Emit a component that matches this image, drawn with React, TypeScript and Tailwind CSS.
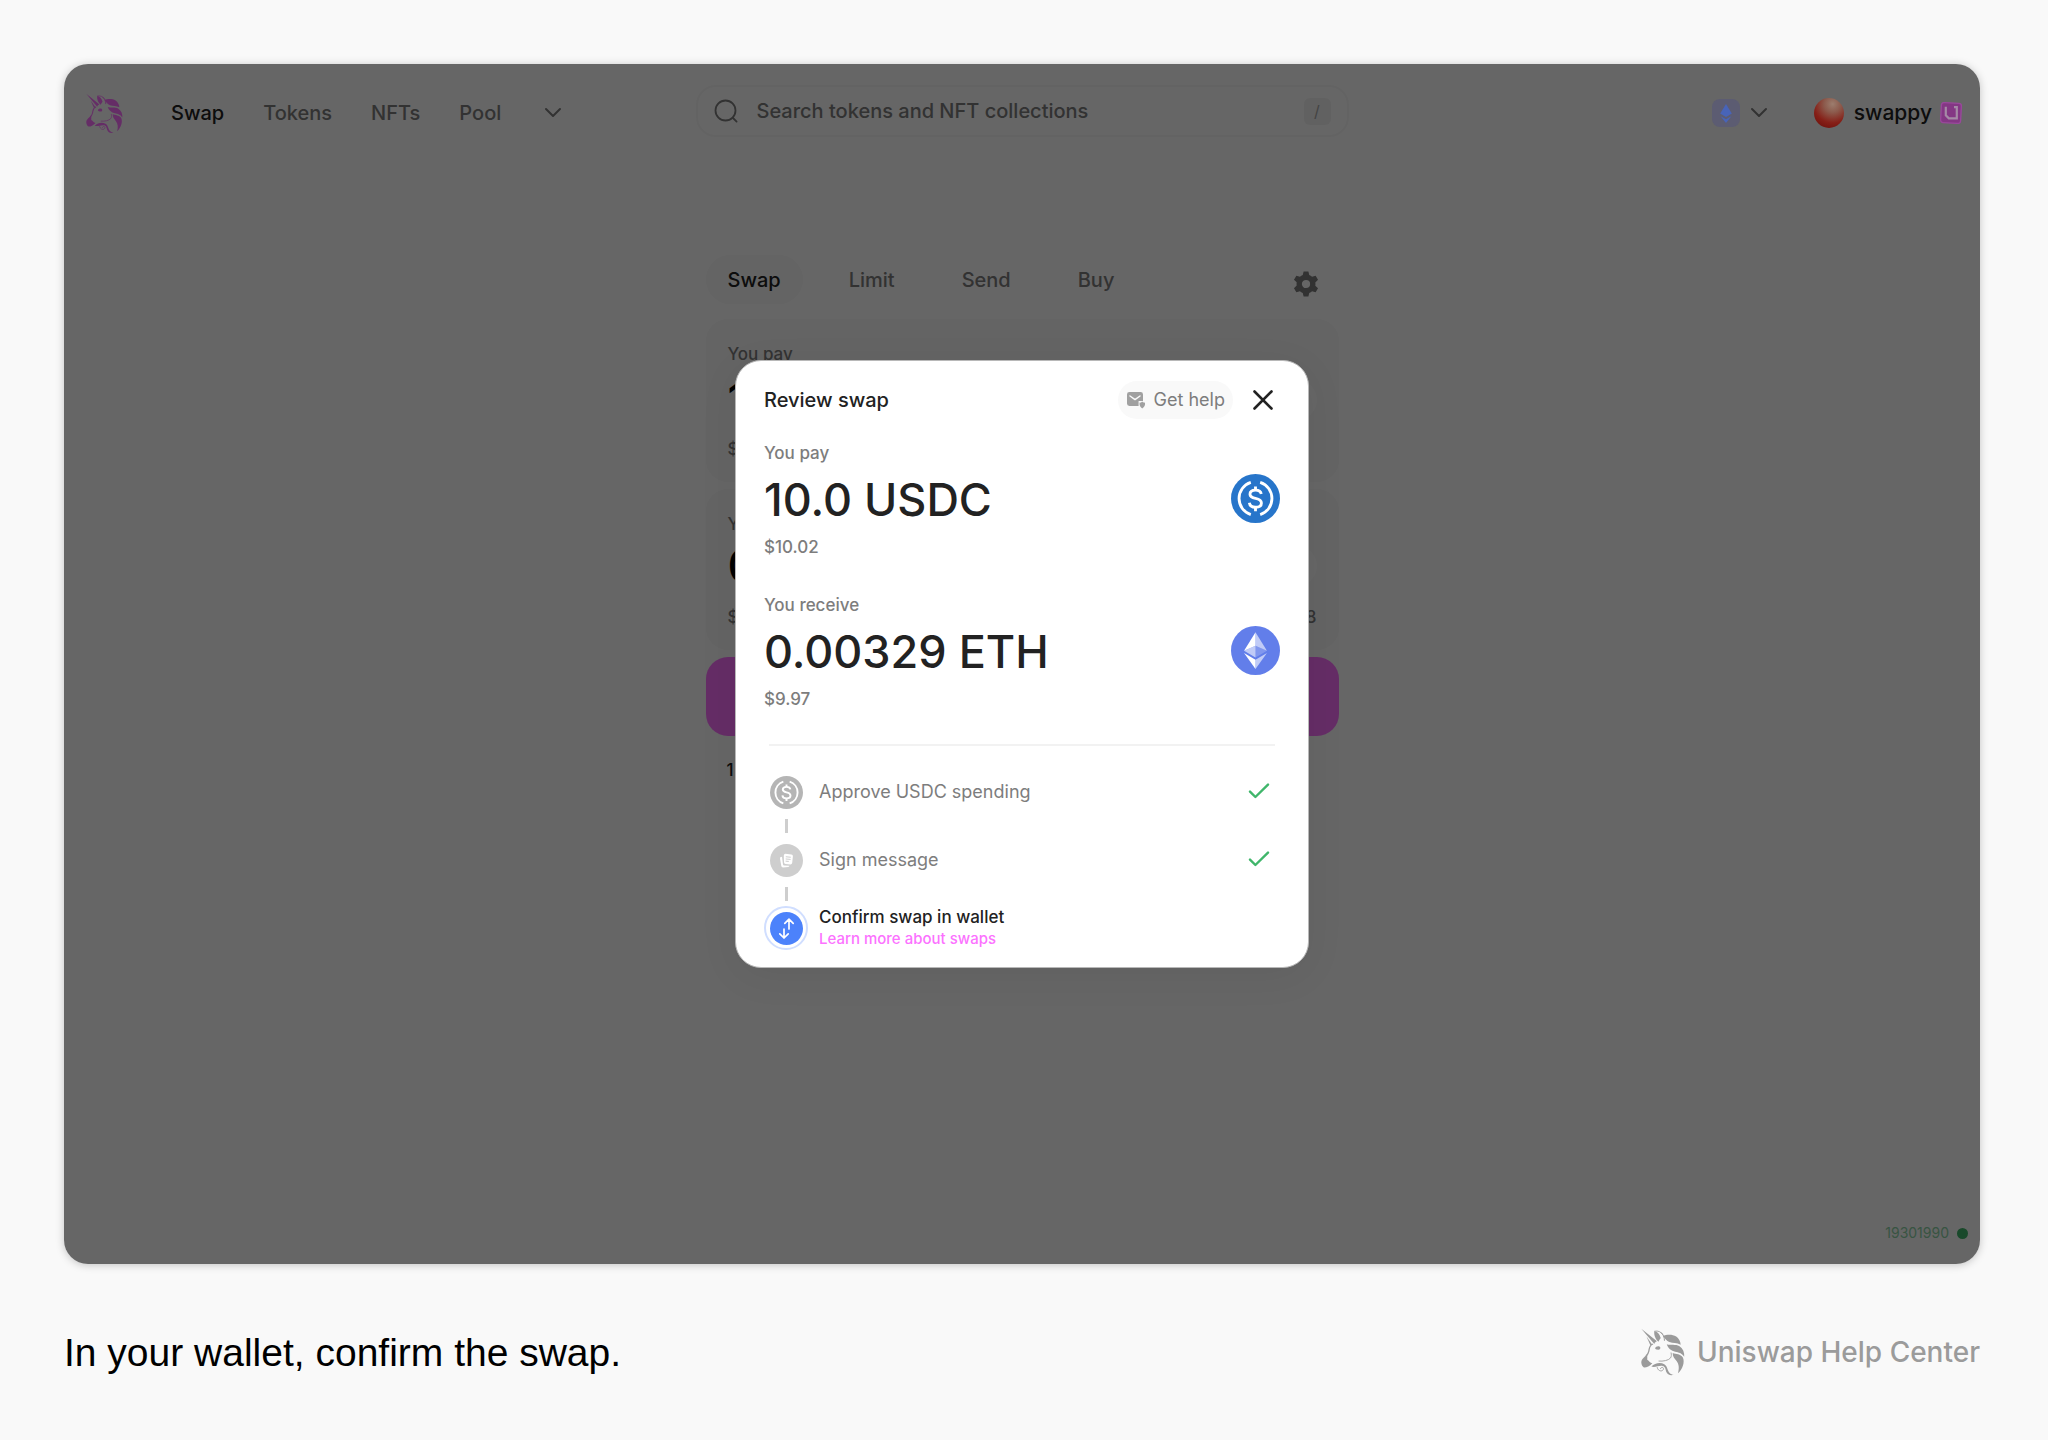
import { ReactNode } from 'react';

const tokens = {
  pay: { label: 'You pay', amount: '10.0 USDC', fiat: '$10.02' },
  receive: { label: 'You receive', amount: '0.00329 ETH', fiat: '$9.97' },
};

const navLinks = ['Tokens', 'NFTs', 'Pool'];
const tabs = ['Limit', 'Send', 'Buy'];

function UnicornLogo({ className }: { className: string }) {
  return (
    <svg viewBox="6 4 45 49" className={className} aria-hidden="true">
      <g fill="currentColor">
        <path d="M6.3 4.6 L22.4 17.6 C21 18 20.2 18.8 19.6 20.2 Z" />
        <path d="M11.6 12.6 L17.6 21 L15.6 21.6 Z" />
        <path d="M19.6 7.2 C23 7.4 25 10 26.2 14.2 C25.4 15.6 24.4 16.6 23.8 18 C21 15.4 19 11.4 19.6 7.2 Z" />
        <path d="M28.4 12.2 C32 10.6 38 10.2 42 12.6 C44.6 14.4 46.4 17.4 46.6 21 C42.6 18.8 38.6 19.8 35 18.4 C32.2 17.2 30.4 14.6 28.4 12.2 Z" />
        <path d="M32.4 20.6 C36 22 41.4 20.2 45.4 22.6 C49 25 50.6 29 50.2 33.4 C47.6 29.4 44.6 29 41 28.2 C37 27.2 33.6 24.8 32.4 20.6 Z" />
        <path d="M38.4 29.4 C42 30.6 46.4 30.4 48.8 34 C51 38.6 48.6 46 43.8 50.2 C45.4 44.6 44.6 40.8 42.4 37.8 C40.4 35.2 38.2 33 38.4 29.4 Z" />
        <path d="M12.4 30.4 C10.6 33.4 6.4 35.2 6.3 39.2 C6.4 42 7.8 43.6 9 44.4 C11.6 44.6 14.6 43.2 17.6 40 C15.2 40 14.6 37.4 12.4 36.4 Z" />
        <path d="M20.4 24.6 C21 22.4 25 21.6 25.8 24 C26 26.4 23.8 26.4 22.6 26 C21.4 25.8 20.8 25.4 20.4 24.6 Z" />
        <path d="M16.6 43.4 C20 39.6 26 38.8 29.8 41 C33.6 43.4 32.6 47.6 35.6 50.2 C36.6 51.2 38 51.6 39.4 51.8 C36 53 33 51.4 31.8 48.6 C31 46.2 31 43.6 28.2 42.8 C24.8 42 20.6 44.6 16.6 43.4 Z" />
      </g>
      <g fill="none" stroke="currentColor" strokeLinecap="round">
        <path d="M17.8 20.6 C14.4 21.8 14.6 25 14 27.6 C13.6 29.6 12.8 31 11.4 32.6" strokeWidth="1.3" />
        <path d="M26.6 8.6 C28.8 10.6 30 13.4 30 16.6" strokeWidth="1" />
        <path d="M20 7.2 C23.6 6.4 26.6 8 28 10.4" strokeWidth="0.9" />
        <path d="M24.4 37.8 C28.6 38.2 34 37.2 36.2 34.6 C37.2 33.2 37.2 31.2 36.8 29.4" strokeWidth="0.9" />
        <path d="M22.6 44.4 C23.4 48.6 28.6 49 29 45.6 C29 43.8 26.4 43.6 26 45.4" strokeWidth="0.9" />
      </g>
    </svg>
  );
}

function UsdcIcon({ className }: { className: string }) {
  return (
    <svg viewBox="0 0 48 48" className={className} aria-hidden="true">
      <circle cx="24" cy="24" r="24" fill="currentColor" />
      <g fill="none" stroke="#fff" strokeWidth="2.8">
        <path d="M19.4 8.2 A16.6 16.6 0 0 0 19.4 39.8" />
        <path d="M28.6 8.2 A16.6 16.6 0 0 1 28.6 39.8" />
        <path d="M29.6 19.6 C29.2 16.8 27 15.8 24 15.8 C20.8 15.8 18.6 17.2 18.6 19.8 C18.6 22.6 20.8 23.2 24 23.9 C27.4 24.6 29.8 25.4 29.8 28.4 C29.8 31.2 27.4 32.6 24 32.6 C20.6 32.6 18.4 31.2 18 28.2" />
        <path d="M24 12.2 V16 M24 32.4 V36.4" />
      </g>
    </svg>
  );
}

function EthIcon({ className }: { className: string }) {
  return (
    <svg viewBox="0 0 48 48" className={className} aria-hidden="true">
      <circle cx="24" cy="24" r="24" fill="#627eea" />
      <g fill="#fff">
        <path d="M24 6 L24 19.3 L35.2 24.3 Z" opacity="0.6" />
        <path d="M24 6 L12.8 24.3 L24 19.3 Z" />
        <path d="M24 33 L24 42 L35.2 26.5 Z" opacity="0.6" />
        <path d="M24 42 L24 33 L12.8 26.5 Z" />
        <path d="M24 30.9 L35.2 24.3 L24 19.3 Z" opacity="0.2" />
        <path d="M12.8 24.3 L24 30.9 L24 19.3 Z" opacity="0.6" />
      </g>
    </svg>
  );
}

function Chevron() {
  return (
    <svg viewBox="0 0 18 12" className="h-3 w-[18px]" fill="none" stroke="currentColor" strokeWidth="2" strokeLinecap="round" strokeLinejoin="round" aria-hidden="true">
      <path d="M2 2 L9 9 L16 2" />
    </svg>
  );
}

function Check() {
  return (
    <svg viewBox="0 0 22 18" className="h-[18px] w-[22px] text-[#40b66b]" fill="none" stroke="currentColor" strokeWidth="2.4" strokeLinecap="round" strokeLinejoin="round" role="img" aria-label="Done">
      <path d="M2 8.6 L7.4 14 L20 1.6" />
    </svg>
  );
}

function Header() {
  return (
    <header className="grid grid-cols-[1fr_auto_1fr] items-center px-[22px] pt-[21px]">
      <nav className="flex items-center pt-1 text-xl leading-7 font-medium text-[#7d7d7d]">
        <UnicornLogo className="mr-12 h-[41px] w-[37px] text-[#fc72ff]" />
        <div className="flex items-center gap-[39px]">
          <a href="#swap" className="text-[#222222]">Swap</a>
          {navLinks.map((link) => (
            <a key={link} href={`#${link.toLowerCase()}`}>{link}</a>
          ))}
          <button type="button" aria-label="More" className="ml-1">
            <Chevron />
          </button>
        </div>
      </nav>

      <div className="flex h-[52px] w-[653px] items-center gap-4 rounded-[20px] border-2 border-[#f8f8f8] px-4 text-[#7d7d7d]">
        <svg viewBox="0 0 24 24" className="h-6 w-6" fill="none" stroke="currentColor" strokeWidth="1.8" strokeLinecap="round" aria-hidden="true">
          <circle cx="11.5" cy="11.5" r="10" />
          <path d="M19 19 L22.6 22.6" />
        </svg>
        <input
          type="text"
          aria-label="Search"
          placeholder="Search tokens and NFT collections"
          className="ml-[3px] min-w-0 flex-1 bg-transparent text-xl leading-7 font-medium outline-none placeholder:text-[#7d7d7d]"
        />
        <kbd className="flex h-[27px] w-[27px] items-center justify-center rounded-md bg-[#f3f3f3] font-[Inter,sans-serif] text-base text-[#a8a8a8]">/</kbd>
      </div>

      <div className="-mr-1 flex items-center justify-end pt-1">
        <button type="button" aria-label="Network" className="flex items-center gap-[10px] text-[#7d7d7d]">
          <span className="relative z-20 flex h-7 w-7 items-center justify-center rounded-lg bg-[#5c5c72]">
            <svg viewBox="0 0 12 19" className="h-[19px] w-3" fill="#4864b8" aria-hidden="true">
              <path d="M6 0 L11.8 9.6 L6 13 L0.2 9.6 Z" />
              <path d="M0.6 12.2 L6 15.2 L11.4 12.2 L6 19 Z" />
            </svg>
          </span>
          <Chevron />
        </button>
        <button type="button" className="ml-[46px] flex items-center text-[21px] leading-7 font-medium text-[#222222]">
          <span className="relative z-20 mr-[10px] h-[30px] w-[30px] rounded-full bg-[radial-gradient(circle_at_62%_20%,#9c7d6e_0%,#8c5a4c_28%,#861f17_62%,#640c08_100%)]" />
          swappy
          <svg viewBox="0 0 22 22" className="relative z-20 ml-2 h-[22px] w-[22px]" aria-hidden="true">
            <rect x="1" y="1" width="20" height="20" rx="2.5" fill="#843784" stroke="#99489b" strokeWidth="1.4" transform="rotate(3 11 11)" />
            <path d="M5.8 4.8 V13.4 L8.8 16.4 H16.8 V5.2 H14" fill="none" stroke="#a58aa6" strokeWidth="2.2" />
          </svg>
        </button>
      </div>
    </header>
  );
}

function SwapForm() {
  return (
    <section className="mx-auto mt-[118px] w-[633px] text-[#7d7d7d]">
      <div className="flex h-[49px] items-center text-xl leading-7 font-medium">
        <button type="button" className="h-full rounded-full bg-[#f9f9f9] px-[22px] text-[#222222]">Swap</button>
        <div className="ml-[46px] flex gap-[67px]">
          {tabs.map((tab) => (
            <button key={tab} type="button">{tab}</button>
          ))}
        </div>
        <button type="button" aria-label="Settings" className="mt-2 mr-5 ml-auto">
          <svg viewBox="0 0 24 24" className="h-[26px] w-[26px]" fill="currentColor" aria-hidden="true">
            <path fillRule="evenodd" d="M9.8 0.5 h4.4 l0.8 3.3 a8.6 8.6 0 0 1 2.6 1.5 l3.3 -1 l2.2 3.8 l-2.5 2.4 a8.7 8.7 0 0 1 0 3 l2.5 2.4 l-2.2 3.8 l-3.3 -1 a8.6 8.6 0 0 1 -2.6 1.5 l-0.8 3.3 h-4.4 l-0.8 -3.3 a8.6 8.6 0 0 1 -2.6 -1.5 l-3.3 1 l-2.2 -3.8 l2.5 -2.4 a8.7 8.7 0 0 1 0 -3 l-2.5 -2.4 l2.2 -3.8 l3.3 1 a8.6 8.6 0 0 1 2.6 -1.5 Z M12 8.2 a3.8 3.8 0 1 0 0 7.6 a3.8 3.8 0 1 0 0 -7.6 Z" />
          </svg>
        </button>
      </div>

      <div className="mt-[15px] h-[163px] rounded-[22px] bg-[#f9f9f9] px-[22px] pt-[21px]">
        <p className="text-[17px] leading-7 font-medium">You pay</p>
        <div className="flex items-center justify-between pt-1">
          <p className="text-[45px] leading-[56px] font-medium text-black">10</p>
          <button type="button" aria-label="Select token to pay" className="h-10 w-36 rounded-full bg-white" />
        </div>
        <p className="pt-[7px] text-[17px] leading-7 font-medium">$10.02</p>
      </div>
      <div className="mt-[7px] h-[161px] rounded-[22px] bg-[#f9f9f9] px-[22px] pt-[21px]">
        <p className="text-[17px] leading-7 font-medium">You receive</p>
        <div className="flex items-center justify-between">
          <p className="text-[45px] leading-[56px] font-medium text-black">0.00329</p>
          <button type="button" aria-label="Select token to receive" className="h-10 w-36 rounded-full bg-white" />
        </div>
        <div className="flex justify-between text-[17px] leading-[46px] font-medium">
          <span>$9.97</span>
          <span>Balance: 0.008</span>
        </div>
      </div>
      <button type="button" aria-label="Swap tokens" className="mt-[7px] block h-[79px] w-full rounded-[22px] bg-[#fc72ff]" />
      <p className="px-[21px] pt-5 text-[17px] leading-7 font-medium text-[#222222]">1 USDC = 0.000329 ETH</p>
    </section>
  );
}

function TokenRow({ token, children }: { token: { label: string; amount: string; fiat: string }; children: ReactNode }) {
  return (
    <div className="flex items-center justify-between">
      <div>
        <p className="text-[17px] leading-6 font-medium text-[#7d7d7d]">{token.label}</p>
        <p className="py-1 text-[45px] leading-[62px] font-medium text-[#222222]">{token.amount}</p>
        <p className="text-[17px] leading-6 font-medium text-[#7d7d7d]">{token.fiat}</p>
      </div>
      <span className="mb-1">{children}</span>
    </div>
  );
}

function Step({ icon, children, done }: { icon: ReactNode; children: ReactNode; done?: boolean }) {
  return (
    <li className="flex h-11 items-center gap-[11px]">
      <span className="flex w-11 items-center justify-center">{icon}</span>
      <div className="flex-1 text-lg leading-6 text-[#7d7d7d]">{children}</div>
      {done && <span className="mr-[10px]"><Check /></span>}
    </li>
  );
}

function Connector() {
  return <li aria-hidden="true" className="my-[5px] ml-[21px] h-[14px] w-[3px] bg-[#cecece]" />;
}

function ReviewModal() {
  return (
    <div role="dialog" aria-label="Review swap" className="w-[574px] rounded-[26px] border border-[#b8b8b8] bg-white px-7 pt-5 pb-[17px] shadow-[0_8px_40px_rgba(0,0,0,0.06)]">
      <div className="flex items-center">
        <h1 className="flex-1 text-xl leading-7 font-medium text-[#222222]">Review swap</h1>
        <button type="button" className="flex h-[38px] items-center gap-2 rounded-full bg-[#f9f9f9] px-2 text-lg text-[#7d7d7d]">
          <svg viewBox="0 0 20 18" className="h-[18px] w-5" aria-hidden="true">
            <path d="M3.4 1 H14.6 A2.4 2.4 0 0 1 17 3.4 V10 H12.6 V15 H3.4 A2.4 2.4 0 0 1 1 12.6 V3.4 A2.4 2.4 0 0 1 3.4 1 Z" fill="#a0a0a0" />
            <path d="M4 5 L9 8.6 L14 5" fill="none" stroke="#f9f9f9" strokeWidth="1.5" strokeLinecap="round" strokeLinejoin="round" />
            <path d="M13.6 11.6 C15 11.8 15.8 11 16.2 10.6 C16.8 11.2 17.8 11.8 19 11.6 C19.4 14.4 18.4 16.2 16.2 17.4 C14.2 16.2 13.2 14.4 13.6 11.6 Z" fill="#a0a0a0" />
          </svg>
          Get help
        </button>
        <button type="button" aria-label="Close" className="mr-[7px] ml-5">
          <svg viewBox="0 0 20 20" className="h-5 w-5" fill="none" stroke="#222222" strokeWidth="2.6" strokeLinecap="round" aria-hidden="true">
            <path d="M1.5 1.5 L18.5 18.5 M18.5 1.5 L1.5 18.5" />
          </svg>
        </button>
      </div>

      <div className="mt-[22px] flex flex-col gap-[34px]">
        <TokenRow token={tokens.pay}>
          <UsdcIcon className="h-[49px] w-[49px] text-[#2775ca]" />
        </TokenRow>
        <TokenRow token={tokens.receive}>
          <EthIcon className="h-[49px] w-[49px]" />
        </TokenRow>
      </div>

      <hr className="mx-[5px] mt-[33px] mb-6 border-t-2 border-[#f2f2f2]" />

      <ol>
        <Step done icon={<UsdcIcon className="h-[33px] w-[33px] text-[#b5b5b5]" />}>Approve USDC spending</Step>
        <Connector />
        <Step
          done
          icon={
            <svg viewBox="0 0 33 33" className="h-[33px] w-[33px]" aria-hidden="true">
              <circle cx="16.5" cy="16.5" r="16.5" fill="#cecece" />
              <path d="M10.2 13.2 L12 12.8 L13 20.6 Q13.2 21.6 14.2 21.6 L19.6 21.8 Q19.2 22.8 18.2 22.9 L13 23.4 Q11.6 23.4 11.3 22 L10 14.6 Z" fill="#fff" />
              <path d="M15.4 9.8 L21.4 10.4 Q23 10.6 22.9 12.2 L22.2 18.8 Q22 20.4 20.4 20.4 L15.6 20 Q14 19.8 14 18.2 L13.8 11.4 Q13.9 9.8 15.4 9.8 Z" fill="#fff" />
              <path d="M16.2 12.8 L20.4 13.2 M16.1 15 L20.2 15.4 M16 17.2 L18.4 17.4" stroke="#cecece" strokeWidth="1" strokeLinecap="round" />
            </svg>
          }
        >
          Sign message
        </Step>
        <Connector />
        <Step
          icon={
            <span className="flex h-11 w-11 items-center justify-center rounded-full border-2 border-[#d0deff]">
              <svg viewBox="0 0 33 33" className="h-[33px] w-[33px]" aria-hidden="true">
                <circle cx="16.5" cy="16.5" r="16.5" fill="#4c82fb" />
                <g fill="none" stroke="#fff" strokeWidth="1.7" strokeLinecap="round" strokeLinejoin="round">
                  <path d="M19 17 V7.4 M14.8 11.4 L19 7.2 L23.2 11.4" />
                  <path d="M14 17 V26 M9.8 21.8 L14 26 L18.2 21.8" />
                </g>
              </svg>
            </span>
          }
        >
          <p className="text-[17px] leading-[22px] font-medium text-[#222222]">Confirm swap in wallet</p>
          <a href="#learn" className="block text-[15px] leading-[22px] font-medium text-[#fc72ff]">Learn more about swaps</a>
        </Step>
      </ol>
    </div>
  );
}

function App() {
  return (
    <div className="flex min-h-screen flex-col bg-[#f9f9f9] pt-16 pr-[68px] pl-16 font-[Inter,sans-serif]">
      <main className="relative flex flex-1 flex-col rounded-3xl bg-white shadow-[0_1px_8px_rgba(0,0,0,0.22)]">
        <Header />
        <SwapForm />
        <div className="mt-auto flex items-center justify-end gap-2 pr-3 pb-[21px] text-sm leading-5 text-[#40b66b]">
          <span className="opacity-60">19301990</span>
          <span className="h-[11px] w-[11px] rounded-full bg-[#40b66b]" />
        </div>
        <div className="absolute inset-0 z-10 flex items-start justify-center rounded-3xl bg-black/60 pt-[296px]">
          <ReviewModal />
        </div>
      </main>

      <footer className="flex h-44 items-center justify-between">
        <p className="pt-[2px] font-['Liberation_Sans',sans-serif] text-[39px] leading-[48px] text-black">In your wallet, confirm the swap.</p>
        <div className="flex items-center gap-3 text-[28px] leading-9 font-medium text-[#9b9b9b]">
          <UnicornLogo className="h-12 w-11" />
          Uniswap Help Center
        </div>
      </footer>
    </div>
  );
}

export default App;
